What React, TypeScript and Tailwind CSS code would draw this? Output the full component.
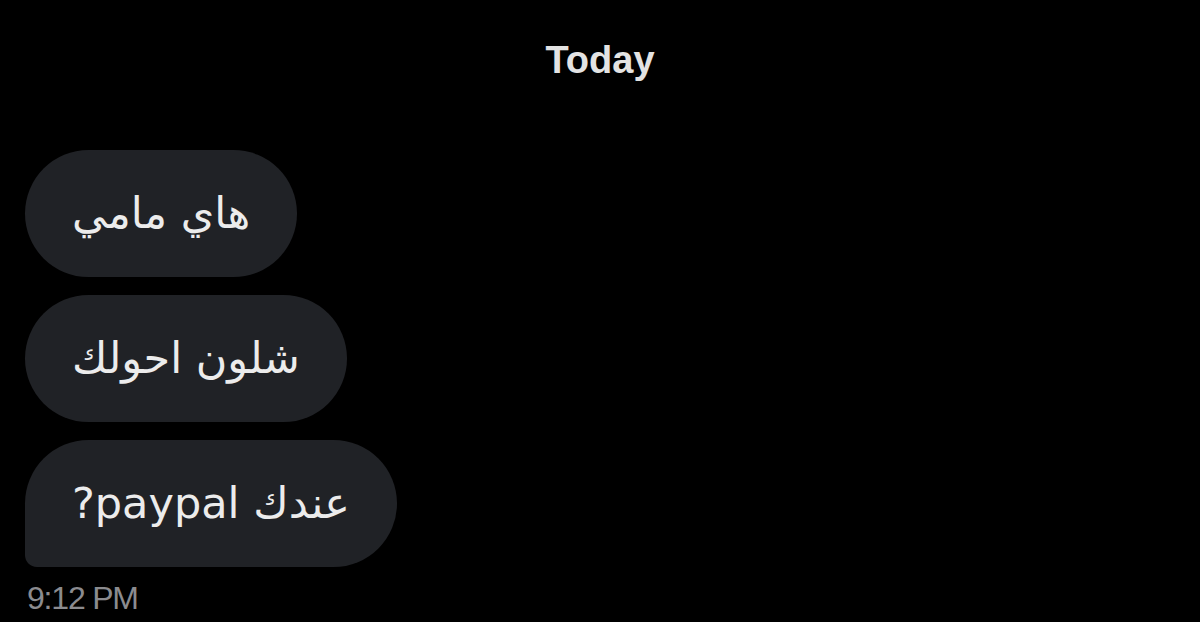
export default function App() {
  const messages = ["هاي مامي", "شلون احولك", "عندك paypal?"];

  return (
    <div className="w-[1200px] h-[622px] bg-black overflow-hidden font-['Liberation_Sans',sans-serif]">
      <div className="pt-[37px] text-center text-[38px] font-bold leading-[46px] text-[#e3e3e3]">
        Today
      </div>

      <div className="mt-[67px] pl-[25px] flex flex-col gap-[18px] items-start">
        {messages.map((msg, i) => (
          <div
            key={i}
            dir="rtl"
            className={
              i === messages.length - 1
                ? "h-[127px] flex items-center px-[47px] bg-[#202226] rounded-[64px] rounded-bl-[12px] text-[43px] text-[#ececec] font-['DejaVu_Sans',sans-serif]"
                : "h-[127px] flex items-center px-[47px] bg-[#202226] rounded-[64px] text-[43px] text-[#ececec] font-['DejaVu_Sans',sans-serif]"
            }
          >
            {msg}
          </div>
        ))}
      </div>

      <div className="pl-[27px] mt-[13px] text-[32px] leading-[36px] tracking-[-1.2px] text-[#8b8b8f]">
        9:12 PM
      </div>
    </div>
  );
}
